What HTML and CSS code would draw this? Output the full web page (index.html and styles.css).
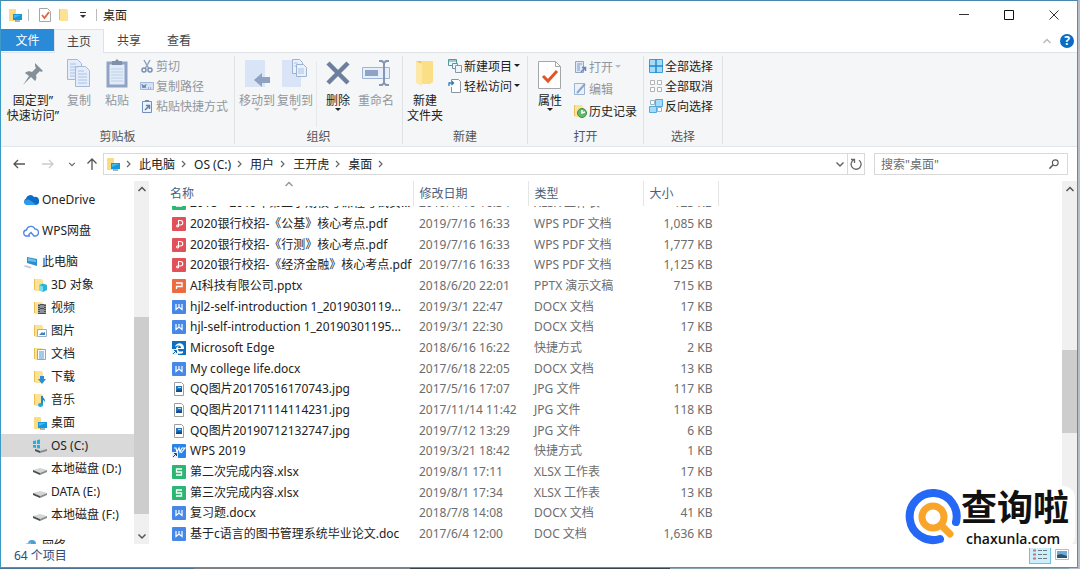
FILE: index.html
```html
<!DOCTYPE html>
<html lang="zh-CN">
<head>
  <meta charset="UTF-8">
  <meta name="viewport" content="width=device-width, initial-scale=1.0">
  <title>桌面</title>
  <link rel="stylesheet" href="styles.css">
</head>
<body>
  <svg class="defs" aria-hidden="true">
    <symbol id="folder" viewBox="0 0 14 14"><path d="M1 1h5v11H1z" fill="#e9bf56"/><path d="M2 1h7l1 2v10H2z" fill="#fbe294"/></symbol>
    <symbol id="desktop" viewBox="0 0 14 14"><path d="M1 1h7v12H1z" fill="#fbdc83"/><path d="M5 6h9v6H5z" fill="#1497dc"/><path d="M6 7h7L6 10z" fill="#45b8ee"/><path d="M7 13h5" stroke="#3a6d92"/></symbol>
    <symbol id="chev-r" viewBox="0 0 10 10"><path d="M3 2l3 3-3 3" fill="none" stroke="#666" stroke-width="1.2"/></symbol>
    <symbol id="chev-d" viewBox="0 0 10 10"><path d="M1.500 3.500l3.500 3.500 3.500-3.500" fill="none" stroke="currentColor" stroke-width="1.5"/></symbol>
    <symbol id="chev-u" viewBox="0 0 10 10"><path d="M1.500 7l3.500-3.500L8.500 7" fill="none" stroke="currentColor" stroke-width="1.5"/></symbol>
    <symbol id="tri" viewBox="0 0 6 4"><path d="M0 0h6L3 3z" fill="currentColor"/></symbol>
    <symbol id="cloud" viewBox="0 0 16 14"><path d="M4 12a3.500 3.500 0 0 1-1-6.500 4.500 4.500 0 0 1 8-1.500A4 4 0 0 1 13 12z" fill="#0f6cc4"/><path d="M4 12c-3 0-4-4-1-5 2-1 4 0 5 1l5 3.500-1 .5z" fill="#2a9ceb"/></symbol>
    <symbol id="wpscloud" viewBox="0 0 16 14"><path d="M7 12H4a3 3 0 0 1-.5-6A4.500 4.500 0 0 1 12 5a3.500 3.500 0 0 1 0 7h-1L8 8.500 5.500 11" fill="none" stroke="#4a86e8" stroke-width="1.300"/></symbol>
    <symbol id="pc" viewBox="0 0 14 14"><path d="M3 2l10 2v7L3 8z" fill="#2d8fcb"/><path d="M4 3l8 2v2L4 6z" fill="#6cc0ec"/><path d="M1 10l7 2-2 1.500-6-2z" fill="#c3ccd3"/></symbol>
    <symbol id="cube" viewBox="0 0 14 14"><use href="#folder"/><path d="M6 7l4-1.500L14 7v5l-4 2-4-2z" fill="#28b3d9"/><path d="M6 7l4 1.500V14l-4-2z" fill="#7bdcf0"/></symbol>
    <symbol id="video" viewBox="0 0 14 14"><use href="#folder"/><path d="M5 3h8v10H5z" fill="#4d4d4d"/><path d="M7 4h4v3H7zm0 4h4v4H7z" fill="#8494a0"/><path d="M6 3v10M12 3v10" stroke="#ddd" stroke-dasharray="1 1"/></symbol>
    <symbol id="picture" viewBox="0 0 14 14"><use href="#folder"/><path d="M4.500 5.500h9v7h-9z" fill="#fff" stroke="#9ab0c0"/><path d="M6 11l3-3 1 1 2-1v3z" fill="#3f83c1"/></symbol>
    <symbol id="docs" viewBox="0 0 14 14"><use href="#folder"/><path d="M4.500 2.500h8v10h-8z" fill="#f3f9fe" stroke="#8faabd"/><path d="M6 5h5M6 7h5M6 9h5M6 11h5" stroke="#5799cf"/></symbol>
    <symbol id="download" viewBox="0 0 14 14"><use href="#folder"/><path d="M7 6h4v3h2l-4 5-4-5h2z" fill="#2a8ddb"/></symbol>
    <symbol id="music" viewBox="0 0 14 14"><use href="#folder"/><path d="M9 3v9" stroke="#1d87c9" stroke-width="2"/><path d="M9 2c0 3 4 3 3 8 0-2-1-3-3-3z" fill="#1d87c9"/><ellipse cx="7.500" cy="12" rx="2.500" ry="2" fill="#2ba2e0"/></symbol>
    <symbol id="disk" viewBox="0 0 14 14"><path d="M0 8l7-2 7 2-7 3z" fill="#d3d5d6"/><path d="M0 8l7 3v2L0 10z" fill="#4b4e50"/><path d="M7 11l7-3v2l-7 3z" fill="#888b8d"/></symbol>
    <symbol id="windisk" viewBox="0 0 14 14"><path d="M0 2l3-.5V5H0zM4 1l3-.5V5H4zM0 6h3v3l-3-.5zM4 6h3v4l-3-.5z" fill="#19b4e6"/><path d="M2 10l7-1 5 1-7 2z" fill="#d3d5d6"/><path d="M2 10l5 2v2l-5-2z" fill="#4b4e50"/><path d="M7 12l7-2v2l-7 2z" fill="#888b8d"/></symbol>
    <symbol id="network" viewBox="0 0 14 14"><circle cx="8" cy="5" r="4" fill="#4f9ed0"/><path d="M1 5l6-2v7l-6-1z" fill="#77bfe2"/></symbol>
    <symbol id="pdf" viewBox="0 0 14 14"><rect width="14" height="14" rx="1" fill="#e2515a"/><path d="M6.500 8V3.500h2a2 2 0 0 1 0 4.500h-3a1 1 0 1 0 1 1.500V8" fill="none" stroke="#fff" stroke-width="1.100"/></symbol>
    <symbol id="ppt" viewBox="0 0 14 14"><rect width="14" height="14" rx="1" fill="#ec6b41"/><path d="M4 4h6v3.500H4.500V10" fill="none" stroke="#fff" stroke-width="1.300"/></symbol>
    <symbol id="word" viewBox="0 0 14 14"><rect width="14" height="14" rx="1" fill="#4588e8"/><path d="M4 4v5.500L7 7l3 2.500V4M7 4v3" fill="none" stroke="#fff" stroke-width="1.200"/></symbol>
    <symbol id="sheet" viewBox="0 0 14 14"><rect width="14" height="14" rx="1" fill="#2bb673"/><path d="M10 4H4.500v3h5v3H4" fill="none" stroke="#fff" stroke-width="1.300"/></symbol>
    <symbol id="edge" viewBox="0 0 14 14"><path d="M0 0h14v14H0z" fill="#0d6fc0"/><path d="M3 6c1-5 9-5 9 1v1H6c0 3 3 3 5 2v2c-4 2-8 0-7-4 0-2 2-3 3-3-1 1-1 1-1 2h3c0-3-4-3-6-1z" fill="#fff"/><path d="M0 8h6v6H0z" fill="#e8f2fa"/><path d="M1 13l3-3M2 9.500h2.500V12" fill="none" stroke="#1d63a5"/></symbol>
    <symbol id="wps" viewBox="0 0 14 14"><rect width="14" height="14" rx="1" fill="#2b83e8"/><path d="M2 4h2l1 4 2-4 1 4 2-4h3L9 9" fill="none" stroke="#fff" stroke-width="1.200"/><path d="M0 8h6v6H0z" fill="#e8f2fa"/><path d="M1 13l3-3M2 9.500h2.500V12" fill="none" stroke="#26435e"/></symbol>
    <symbol id="jpg" viewBox="0 0 14 14"><path d="M2.500.5h7l2 2v11h-9z" fill="#fff" stroke="#9a9fa3"/><path d="M4 4h6v6H4z" fill="#2477bd"/><path d="M4 9l2-2 2 1 2-1v3H4z" fill="#174d82"/><path d="M6 5h3v1H6z" fill="#a6dcf6"/></symbol>
    <symbol id="check" viewBox="0 0 24 30"><path d="M.5 1.500h17l5 5v22H.5z" fill="#fff" stroke="#a3a7ab"/><path d="M17.500 1.500v5h5" fill="none" stroke="#a3a7ab"/><path d="M5 16l5 5 9-10" fill="none" stroke="#e0562b" stroke-width="3"/></symbol>
  </svg>

  <div class="window">
    <header class="titlebar">
      <svg class="i14"><use href="#desktop"/></svg>
      <span class="bar"></span>
      <button class="quick" aria-label="属性"><svg width="12" height="14" viewBox="0 0 12 14"><path d="M.5.5h8l3 3v10H.5z" fill="#fff" stroke="#a3a7ab"/><path d="M3 7l2.500 3L10 4" fill="none" stroke="#e0663f" stroke-width="1.800"/></svg></button>
      <button class="quick" aria-label="新建文件夹"><svg class="i14"><use href="#folder"/></svg></button>
      <button class="quick more" aria-label="自定义快速访问工具栏"><svg width="6" height="8" viewBox="0 0 6 8"><path d="M0 1.500h6" stroke="#333"/><path d="M0 4h6L3 7z" fill="#333"/></svg></button>
      <span class="bar"></span>
      <h1>桌面</h1>
      <div class="controls">
        <button aria-label="最小化"><svg width="10" height="10"><path d="M0 4.500h10" stroke="#333"/></svg></button>
        <button aria-label="最大化"><svg width="10" height="10"><path d="M.5.5h9v9h-9z" fill="none" stroke="#111"/></svg></button>
        <button aria-label="关闭"><svg width="10" height="10"><path d="M.5.5l9 9M9.500.5l-9 9" stroke="#333"/></svg></button>
      </div>
    </header>

    <nav class="tabs">
      <button class="file">文件</button>
      <button class="active">主页</button>
      <button>共享</button>
      <button>查看</button>
      <div class="help">
        <button aria-label="折叠功能区"><svg class="i10"><use href="#chev-u"/></svg></button>
        <button class="question" aria-label="帮助">?</button>
      </div>
    </nav>

    <div class="ribbon">
      <section class="group clipboard">
        <div class="tools">
          <button class="big wide">
            <svg width="22" height="32" viewBox="0 0 22 32"><path d="M13 4l8 8-2 1-1-1-4 4c1 3 0 5-1 6l-4-4-8 8 6-9-4-3c2-2 5-2 7-1l4-4-1-2z" fill="#858f98"/></svg>
            固定到”<br>快速访问”
          </button>
          <button class="big" disabled>
            <svg width="24" height="32" viewBox="0 0 24 32"><g fill="#e4edf9" stroke="#a4b9d8"><path d="M.5.5h10l4 4v16H.5z"/><path d="M8.500 7.500h10l4 4v16h-14z"/></g><path d="M3 5h6M3 8h8M3 11h5M3 14h5M3 17h5M11 12h6M11 15h9M11 18h9M11 21h9M11 24h9" stroke="#a9c2e6"/></svg>
            复制
          </button>
          <button class="big" disabled>
            <svg width="22" height="32" viewBox="0 0 22 32"><path d="M2 4h18v23H2z" fill="#e2ecf9" stroke="#8fa3c4" stroke-width="3"/><path d="M6 2h3l2-2 2 2h3v4H6z" fill="#7f90ab"/><path d="M5 10h12M5 13h12M5 16h12M5 19h12M5 22h12" stroke="#bccfe9"/></svg>
            粘贴
          </button>
          <div class="list">
            <button disabled><svg class="i14" viewBox="0 0 14 14"><path d="M4 1l5 9M10 1l-5 9" stroke="#8ea3c0" stroke-width="1.500"/><g fill="none" stroke="#7890b4" stroke-width="1.500"><circle cx="4" cy="11" r="2"/><circle cx="10" cy="11" r="2"/></g></svg>剪切</button>
            <button disabled><svg class="i14" viewBox="0 0 14 14"><path d="M.5 3.500h13v7H.5z" fill="#d5e2f5" stroke="#a4b9d8"/><path d="M2 5l1 4 1-3 1 3 1-4M8 9h1m1 0h1" fill="none" stroke="#6883ac"/></svg>复制路径</button>
            <button disabled><svg class="i14" viewBox="0 0 14 14"><path d="M2.500 2.500h9v11h-9z" fill="#eaf2fc" stroke="#7590b8"/><path d="M5 1h4v2H5z" fill="#7590b8"/><path d="M5 11l4-4M6 6.500h3.500V10" fill="none" stroke="#5f7faf" stroke-width="1.500"/></svg>粘贴快捷方式</button>
          </div>
        </div>
        <h2>剪贴板</h2>
      </section>

      <section class="group organize">
        <div class="tools">
          <button class="big" disabled>
            <svg width="26" height="32" viewBox="0 0 26 32"><path d="M1 1h19l1 1v26H1z" fill="#d9e5f6"/><path d="M10 21l8-7v4h8v6h-8v4z" fill="#8ea2c2"/></svg>
            移动到
            <svg class="tri"><use href="#tri"/></svg>
          </button>
          <button class="big" disabled>
            <svg width="26" height="32" viewBox="0 0 26 32"><path d="M0 1h19v27H0z" fill="#d9e5f6"/><g fill="#eaf1fb" stroke="#9db3d4"><path d="M10.500.5h7l3 3v11h-10z"/><path d="M14.500 5.500h7l3 3v9h-10z"/></g><path d="M12 4h4M12 7h2M16 10h6M16 12h6M16 14h6" stroke="#a9c2e6"/></svg>
            复制到
            <svg class="tri"><use href="#tri"/></svg>
          </button>
          <span class="divider"></span>
          <button class="big">
            <svg width="24" height="32" viewBox="0 0 24 32"><path d="M2 4l20 20M22 4L2 24" stroke="#6d7f9c" stroke-width="4.500"/></svg>
            删除
            <svg class="tri"><use href="#tri"/></svg>
          </button>
          <button class="big" disabled>
            <svg width="28" height="32" viewBox="0 0 28 32"><path d="M.5 8.500h27v11H.5z" fill="#e6effb" stroke="#9fb5d6"/><path d="M3 11h13v6H3z" fill="#8fa4c5"/><path d="M17 2h3l2 2 2-2h3M22 4v21M17 26h3l2-2 2 2h3" fill="none" stroke="#8396b4" stroke-width="2"/></svg>
            重命名
          </button>
        </div>
        <h2>组织</h2>
      </section>

      <section class="group create">
        <div class="tools">
          <button class="big">
            <svg width="20" height="32" viewBox="0 0 20 32"><path d="M1 2h10v22H1z" fill="#edc55d"/><path d="M6 2h12v21l-3 2H6z" fill="#fbdf87"/><path d="M1 2l6 3v22l-6-3z" fill="#fce9aa"/></svg>
            新建<br>文件夹
          </button>
          <div class="list">
            <button><svg class="i14" viewBox="0 0 14 14"><g fill="#eef6fb"><path d="M.5.500h8v6h-8z" stroke="#4e9a9b"/><path d="M4.500 4.500h5v5h-5z" stroke="#6d8ea8"/><path d="M7.500 6.500h6v7h-6z" stroke="#8895a2"/></g><path d="M1 2h7" stroke="#4e9a9b"/></svg>新建项目<svg class="tri"><use href="#tri"/></svg></button>
            <button><svg class="i14" viewBox="0 0 14 14"><path d="M3.500 2.500V.5h7l2 2v11h-9V8" fill="#fff" stroke="#8895a2"/><path d="M1 7V4h4M3.500 2l2 2-2 2" fill="none" stroke="#2c7cba" stroke-width="1.300"/></svg>轻松访问<svg class="tri"><use href="#tri"/></svg></button>
          </div>
        </div>
        <h2>新建</h2>
      </section>

      <section class="group open">
        <div class="tools">
          <button class="big">
            <svg width="24" height="32" viewBox="0 0 24 30"><use href="#check"/></svg>
            属性
            <svg class="tri"><use href="#tri"/></svg>
          </button>
          <div class="list loose">
            <button disabled><svg class="i14" viewBox="0 0 14 14"><path d="M2.500 1.500h8v11h-8z" fill="#dfe9f8" stroke="#8fa6c9"/><path d="M4 4h5M4 6h3M4 8h3M4 10h3" stroke="#7f9ac2"/><path d="M8 12l4-4M9 7.500h3.500V11" fill="none" stroke="#6884b3" stroke-width="1.500"/></svg>打开<svg class="tri"><use href="#tri"/></svg></button>
            <button disabled><svg class="i14" viewBox="0 0 14 14"><path d="M1.500 1.500h10v11h-10z" fill="#eaf1fb" stroke="#9db3d4"/><path d="M4 11l8-9" stroke="#8ba4cb" stroke-width="2"/></svg>编辑</button>
            <button><svg class="i14" viewBox="0 0 14 14"><use href="#folder"/><circle cx="9" cy="9" r="4.500" fill="#65b86c" stroke="#398f45"/><path d="M9 6v3l3-1" fill="none" stroke="#fff" stroke-width="1.500"/></svg>历史记录</button>
          </div>
        </div>
        <h2>打开</h2>
      </section>

      <section class="group select">
        <div class="tools">
          <div class="list">
            <button><svg class="i14" viewBox="0 0 14 14"><path d="M.5.5h13v13H.5z" fill="#a4dafa" stroke="#3b9edb"/><path d="M7 0v14M0 7h14" stroke="#2788c7" stroke-width="1.500"/></svg>全部选择</button>
            <button><svg class="i14" viewBox="0 0 14 14"><path d="M1.500 1.500h4v4h-4zM8.500 1.500h4v4h-4zM1.500 8.500h4v4h-4zM8.500 8.500h4v4h-4z" fill="#fff" stroke="#afb4b9"/></svg>全部取消</button>
            <button><svg class="i14" viewBox="0 0 14 14"><path d="M1.500 1.500h4v4h-4zM8.500 8.500h4v4h-4z" fill="#fff" stroke="#9ab3c6"/><path d="M6.500.5h7v7h-7zM.5 7.500h7v6h-7z" fill="#a4dafa" stroke="#56a9dc"/></svg>反向选择</button>
          </div>
        </div>
        <h2>选择</h2>
      </section>
    </div>

    <div class="address">
      <button aria-label="后退"><svg width="12" height="12" viewBox="0 0 12 12"><path d="M12 6H1M5 2L1 6l4 4" fill="none" stroke="#555" stroke-width="1.300"/></svg></button>
      <button aria-label="前进" disabled><svg width="12" height="12" viewBox="0 0 12 12"><path d="M0 6h11M7 2l4 4-4 4" fill="none" stroke="#ccc" stroke-width="1.300"/></svg></button>
      <button class="narrow" aria-label="最近浏览的位置"><svg width="8" height="8"><use href="#chev-d"/></svg></button>
      <button class="narrow" aria-label="上移"><svg width="12" height="12" viewBox="0 0 12 12"><path d="M6 12V1M1.500 5.500L6 1l4.500 4.500" fill="none" stroke="#555" stroke-width="1.300"/></svg></button>
      <div class="path">
        <svg class="i14"><use href="#desktop"/></svg>
        <svg class="i10"><use href="#chev-r"/></svg>
        <a href="#">此电脑</a><svg class="i10"><use href="#chev-r"/></svg>
        <a href="#">OS (C:)</a><svg class="i10"><use href="#chev-r"/></svg>
        <a href="#">用户</a><svg class="i10"><use href="#chev-r"/></svg>
        <a href="#">王开虎</a><svg class="i10"><use href="#chev-r"/></svg>
        <a href="#">桌面</a><svg class="i10"><use href="#chev-r"/></svg>
        <button class="history" aria-label="以前的位置"><svg width="10" height="10"><use href="#chev-d"/></svg></button>
        <button class="refresh" aria-label="刷新"><svg width="12" height="12" viewBox="0 0 12 12"><path d="M3.500 2A5 5 0 1 0 9 2.200M1 1.500h3.500V5" fill="none" stroke="#666" stroke-width="1.300"/></svg></button>
      </div>
      <label class="search">
        <input type="text" aria-label="搜索" placeholder="搜索&quot;桌面&quot;">
        <svg width="10" height="10" viewBox="0 0 12 12"><circle cx="7.500" cy="4.500" r="3.500" fill="none" stroke="#555" stroke-width="1.300"/><path d="M5 7l-4.500 4.500" stroke="#555" stroke-width="1.800"/></svg>
      </label>
    </div>

    <div class="content">
      <nav class="tree">
        <a class="root" href="#"><svg width="16" height="14"><use href="#cloud"/></svg>OneDrive</a>
        <a class="root" href="#"><svg width="16" height="14"><use href="#wpscloud"/></svg>WPS网盘</a>
        <a class="root" href="#"><svg width="16" height="14"><use href="#pc"/></svg>此电脑</a>
        <a href="#"><svg class="i14"><use href="#cube"/></svg>3D 对象</a>
        <a href="#"><svg class="i14"><use href="#video"/></svg>视频</a>
        <a href="#"><svg class="i14"><use href="#picture"/></svg>图片</a>
        <a href="#"><svg class="i14"><use href="#docs"/></svg>文档</a>
        <a href="#"><svg class="i14"><use href="#download"/></svg>下载</a>
        <a href="#"><svg class="i14"><use href="#music"/></svg>音乐</a>
        <a href="#"><svg class="i14"><use href="#desktop"/></svg>桌面</a>
        <a class="selected" href="#"><svg class="i14"><use href="#windisk"/></svg>OS (C:)</a>
        <a href="#"><svg class="i14"><use href="#disk"/></svg>本地磁盘 (D:)</a>
        <a href="#"><svg class="i14"><use href="#disk"/></svg>DATA (E:)</a>
        <a href="#"><svg class="i14"><use href="#disk"/></svg>本地磁盘 (F:)</a>
        <a class="root" href="#"><svg width="16" height="14"><use href="#network"/></svg>网络</a>
      </nav>
      <div class="scroll tree-scroll">
        <button aria-label="向上滚动"><svg class="i10"><use href="#chev-u"/></svg></button>
        <div class="thumb"></div>
        <button class="down" aria-label="向下滚动"><svg class="i10"><use href="#chev-d"/></svg></button>
      </div>

      <main class="files">
        <table>
          <thead>
            <tr>
              <th class="name">名称<svg class="sort"><use href="#chev-u"/></svg></th>
              <th class="date">修改日期</th>
              <th class="type">类型</th>
              <th class="size">大小</th>
            </tr>
          </thead>
          <tbody>
            <tr class="cut"><td><div><svg class="i14"><use href="#sheet"/></svg>2018－2019年第二学期校考课程考试安...</div></td><td><div>2019/7/16 16:34</div></td><td><div>XLSX 工作表</div></td><td><div>123 KB</div></td></tr>
            <tr><td><svg class="i14"><use href="#pdf"/></svg>2020银行校招-《公基》核心考点.pdf</td><td>2019/7/16 16:33</td><td>WPS PDF 文档</td><td>1,085 KB</td></tr>
            <tr><td><svg class="i14"><use href="#pdf"/></svg>2020银行校招-《行测》核心考点.pdf</td><td>2019/7/16 16:33</td><td>WPS PDF 文档</td><td>1,777 KB</td></tr>
            <tr><td><svg class="i14"><use href="#pdf"/></svg>2020银行校招-《经济金融》核心考点.pdf</td><td>2019/7/16 16:33</td><td>WPS PDF 文档</td><td>1,125 KB</td></tr>
            <tr><td><svg class="i14"><use href="#ppt"/></svg>AI科技有限公司.pptx</td><td>2018/6/20 22:01</td><td>PPTX 演示文稿</td><td>715 KB</td></tr>
            <tr><td><svg class="i14"><use href="#word"/></svg>hjl2-self-introduction 1_2019030119...</td><td>2019/3/1 22:47</td><td>DOCX 文档</td><td>17 KB</td></tr>
            <tr><td><svg class="i14"><use href="#word"/></svg>hjl-self-introduction 1_20190301195...</td><td>2019/3/1 22:30</td><td>DOCX 文档</td><td>17 KB</td></tr>
            <tr><td><svg class="i14"><use href="#edge"/></svg>Microsoft Edge</td><td>2018/6/16 16:22</td><td>快捷方式</td><td>2 KB</td></tr>
            <tr><td><svg class="i14"><use href="#word"/></svg>My college life.docx</td><td>2017/6/18 22:05</td><td>DOCX 文档</td><td>13 KB</td></tr>
            <tr><td><svg class="i14"><use href="#jpg"/></svg>QQ图片20170516170743.jpg</td><td>2017/5/16 17:07</td><td>JPG 文件</td><td>117 KB</td></tr>
            <tr><td><svg class="i14"><use href="#jpg"/></svg>QQ图片20171114114231.jpg</td><td>2017/11/14 11:42</td><td>JPG 文件</td><td>118 KB</td></tr>
            <tr><td><svg class="i14"><use href="#jpg"/></svg>QQ图片20190712132747.jpg</td><td>2019/7/12 13:29</td><td>JPG 文件</td><td>6 KB</td></tr>
            <tr><td><svg class="i14"><use href="#wps"/></svg>WPS 2019</td><td>2019/3/21 18:42</td><td>快捷方式</td><td>1 KB</td></tr>
            <tr><td><svg class="i14"><use href="#sheet"/></svg>第二次完成内容.xlsx</td><td>2019/8/1 17:11</td><td>XLSX 工作表</td><td>17 KB</td></tr>
            <tr><td><svg class="i14"><use href="#sheet"/></svg>第三次完成内容.xlsx</td><td>2019/8/1 17:34</td><td>XLSX 工作表</td><td>13 KB</td></tr>
            <tr><td><svg class="i14"><use href="#word"/></svg>复习题.docx</td><td>2018/7/8 14:08</td><td>DOCX 文档</td><td>41 KB</td></tr>
            <tr><td><svg class="i14"><use href="#word"/></svg>基于c语言的图书管理系统毕业论文.doc</td><td>2017/6/4 12:00</td><td>DOC 文档</td><td>1,636 KB</td></tr>
          </tbody>
        </table>
      </main>
      <div class="scroll file-scroll">
        <button aria-label="向上滚动"><svg class="i10"><use href="#chev-u"/></svg></button>
        <div class="thumb"></div>
        <button class="down" aria-label="向下滚动"><svg class="i10"><use href="#chev-d"/></svg></button>
      </div>
    </div>

    <footer class="status">
      <span>64 个项目</span>
      <button class="view on" aria-label="详细信息"><svg width="14" height="12" viewBox="0 0 14 12"><path d="M0 1.500h3M0 5.500h3M0 9.500h3" stroke="#c77676" stroke-width="2"/><path d="M5 1.500h4m1 0h4M5 5.500h4m1 0h4M5 9.500h4m1 0h4" stroke="#6c7a83"/></svg></button>
      <button class="view" aria-label="大缩略图"><svg width="14" height="12" viewBox="0 0 14 12"><path d="M.5.5h13v10H.5z" fill="#fff" stroke="#b6bcc2"/><path d="M2 2h10v7H2z" fill="#6fa8dc"/><path d="M2 6l4-1 6 2v2H2z" fill="#28566b"/></svg></button>
    </footer>

    <div class="watermark">
      <svg width="56" height="56" viewBox="0 0 56 56"><path d="M35 50A23.500 23.500 0 1 1 51 33" fill="none" stroke="#2468f5" stroke-width="8" stroke-linecap="round"/><circle cx="28" cy="28" r="11" fill="none" stroke="#f9a52b" stroke-width="7"/><path d="M37 37l8 8" stroke="#f9a52b" stroke-width="7" stroke-linecap="round"/></svg>
      <div><strong>查询啦</strong><span>chaxunla.com</span></div>
    </div>
  </div>
</body>
</html>
```
FILE: styles.css
```css
* { box-sizing: border-box; }
body {
  margin: 0;
  height: 100vh;
  padding: 0 2px 1px 0;
  background: linear-gradient(90deg, #4b7396 0 18%, #7b8084 18% 38%, #37464e 38% 62%, #8ba7b4 62% 99%, #b9bcc9 99%);
  font: 12px/15px "Noto Sans", "Noto Sans CJK SC", sans-serif;
  color: #222;
}
svg { display: block; flex: none; }
h1, h2 { margin: 0; font-size: 12px; font-weight: normal; }
a { color: inherit; text-decoration: none; }
button { border: 0; padding: 0; background: none; font: inherit; color: inherit; display: flex; align-items: center; justify-content: center; white-space: nowrap; }
button:disabled { color: #92969b; }
.defs { position: absolute; width: 0; height: 0; }
.i14 { width: 14px; height: 14px; }
.i10 { width: 10px; height: 10px; }
.tri { width: 6px; height: 4px; }
button:disabled .tri { color: #bbb; }

.window { position: relative; height: 100%; display: flex; flex-direction: column; background: #fff; border: 1px solid #3c9bc4; border-top-color: #4a86ae; overflow: hidden; }

/* title bar */
.titlebar { display: flex; align-items: center; height: 28px; padding-left: 7px; flex: none; }
.bar { width: 1px; height: 12px; background: #bbb; margin: 0 6px; }
.quick { width: 20px; height: 20px; }
.more { width: 15px; }
.controls { display: flex; margin-left: auto; padding-right: 1px; }
.controls button { width: 45px; height: 28px; }

/* tabs */
.tabs { display: flex; height: 24px; flex: none; border-bottom: 1px solid #dfe3e7; }
.tabs > button { width: 50px; color: #444; }
.tabs .file { width: 53px; height: 22px; background: #2a8ad8; color: #fff; }
.tabs .active { height: 24px; background: #f4f6f8; border: 1px solid #dfe3e7; border-width: 1px 1px 0; }
.help { display: flex; align-items: center; gap: 8px; margin-left: auto; padding-right: 3px; color: #bbb; }
.question { width: 14px; height: 14px; border-radius: 7px; background: #0b6cc4; color: #fff; font-weight: bold; }

/* ribbon */
.ribbon { display: flex; flex: none; background: #f4f6f8; border-bottom: 1px solid #e3e6e9; padding: 3px 0 2px; }
.group { display: flex; flex-direction: column; border-right: 1px solid #e0e3e6; padding-top: 3px; }
.clipboard { width: 234px; }
.organize { width: 168px; }
.create { width: 125px; }
.open { width: 116px; }
.select { width: 79px; }
.tools { display: flex; height: 70px; padding-left: 3px; }
.clipboard .tools, .select .tools { padding-left: 5px; }
.group h2 { text-align: center; color: #555; }
.big { display: flex; flex-direction: column; justify-content: flex-start; width: 38px; }
.big.wide { width: 54px; }
.big > svg:first-child { margin-bottom: 2px; }
.list { display: flex; flex-direction: column; margin-left: 4px; }
.list button { height: 20px; gap: 2px; justify-content: flex-start; margin-top: -3px; margin-bottom: 3px; }
.list.loose button { height: 22px; }
.list .tri { margin-left: 0; }
.divider { width: 1px; background: #e6e8eb; margin: 2px; }
.create .big, .open .big { width: 38px; }
.select .list { margin-left: 0; }

/* address bar */
.address { display: flex; align-items: center; height: 34px; flex: none; padding: 0 9px 0 3px; }
.address > button { width: 29px; height: 22px; color: #666; }
.address > .narrow { width: 20px; }
.path { display: flex; align-items: center; flex: 1; height: 22px; margin-left: 1px; border: 1px solid #d9d9d9; padding-left: 2px; }
.path > .i10 { margin: 0 5px 0 4px; }
.path a { white-space: nowrap; }
.path button { height: 20px; color: #666; }
.history { margin-left: auto; width: 14px; }
.refresh { width: 17px; border-left: 1px solid #d9d9d9; }
.search { display: flex; align-items: center; width: 194px; height: 22px; margin-left: 9px; border: 1px solid #d9d9d9; padding: 0 8px 0 6px; }
.search input { flex: 1; min-width: 0; border: 0; padding: 0; font: inherit; background: none; }
.search input::placeholder { color: #6d6d6d; }

/* content */
.content { display: flex; flex: 1; min-height: 0; }
.tree { width: 133px; padding-top: 7px; overflow: hidden; }
.tree a { display: flex; align-items: center; gap: 4px; height: 23px; padding-left: 32px; white-space: nowrap; }
.tree .root { padding-left: 22px; gap: 3px; }
.tree .root + .root, .tree a + .root:last-child { margin-top: 8px; }
.tree .selected { background: #d9d9d9; }
.scroll { display: grid; width: 15px; background: #f0f0f0; color: #555; }
.tree-scroll { grid-template-rows: 16px 120fr 197fr 14fr 16px; }
.file-scroll { grid-template-rows: 16px 153fr 83fr 95fr 16px; }
.thumb { grid-row: 3; background: #cdcdcd; }
.down { grid-row: 5; }
.files { flex: 1; padding-left: 14px; overflow: hidden; }
table { width: 556px; height: 100%; table-layout: fixed; border-collapse: collapse; }
th { height: 25px; padding: 0 6px; text-align: left; font-weight: normal; color: #4c607a; border-right: 1px solid #e5e5e5; }
.name { position: relative; width: 250px; padding-left: 7px; }
.date, .type { width: 115px; }
.sort { position: absolute; left: 121px; top: -2px; width: 10px; height: 10px; color: #999; }
td { padding: 0 6px; color: #6d6d6d; white-space: nowrap; }
td:first-child { padding: 0 0 0 9px; color: #222; }
td:last-child { text-align: right; }
td .i14 { display: inline-block; vertical-align: -3px; margin-right: 4px; }
.cut td { height: 7px; }
.cut div { display: flex; align-items: flex-end; height: 7px; padding-bottom: 3px; overflow: hidden; }
.cut td:last-child div { justify-content: flex-end; }

/* status bar */
.status { display: flex; align-items: center; height: 23px; flex: none; padding: 0 4px 1px 13px; color: #2f4b73; }
.status span { margin-right: auto; }
.view { width: 22px; height: 18px; border: 1px solid transparent; }
.view.on { background: #cdeefa; border-color: #6cc3e0; }

.watermark { position: absolute; right: 2px; bottom: 19px; display: flex; align-items: center; background: #fff; border-radius: 12px; color: #111; }
.watermark div { display: flex; flex-direction: column; padding: 0 6px 0 0; }
.watermark strong { font-size: 36px; line-height: 44px; font-weight: 700; }
.watermark span { font: 600 14px/18px "Open Sans", sans-serif; padding-left: 5px; }
```
